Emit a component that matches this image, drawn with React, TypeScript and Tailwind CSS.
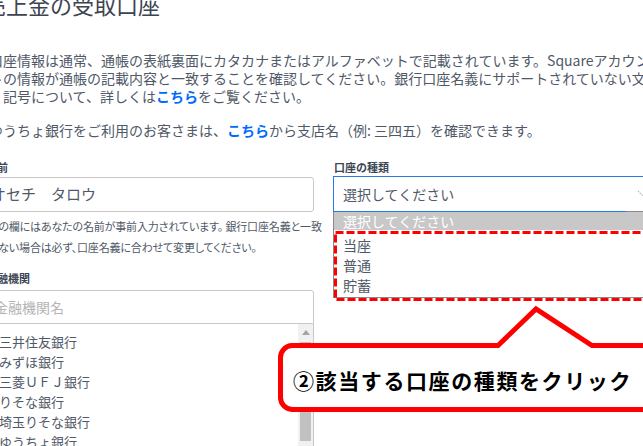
import React from "react";

const banks = ["三井住友銀行", "みずほ銀行", "三菱ＵＦＪ銀行", "りそな銀行", "埼玉りそな銀行", "ゆうちょ銀行"];

export default function App() {
  return (
    <div className="relative w-[643px] h-[446px] overflow-hidden bg-white font-['Noto_Sans_CJK_JP','Liberation_Sans',sans-serif] text-[#4f5968]">
      <div className="ml-[-11px] w-[720px]">
        <h1 className="ml-[-5px] mt-[-7px] text-[22px] leading-[22px] text-[#3d4451] whitespace-nowrap">売上金の受取口座</h1>

        <div className="mt-[36px] text-[14px] leading-[18px] whitespace-nowrap">
          <div>口座情報は通常、通帳の表紙裏面にカタカナまたはアルファベットで記載されています。Squareアカウント</div>
          <div>トの情報が通帳の記載内容と一致することを確認してください。銀行口座名義にサポートされていない文字</div>
          <div className="pl-[14px]">
            記号について、詳しくは<span className="text-[#006aff] font-bold">こちら</span>をご覧ください。
          </div>
        </div>

        <div className="mt-[16px] text-[14px] leading-[18px] whitespace-nowrap">
          ゆうちょ銀行をご利用のお客さまは、<span className="text-[#006aff] font-bold">こちら</span>から支店名（例: 三四五）を確認できます。
        </div>

        <div className="mt-[20px] flex items-start">
          {/* left column */}
          <div className="w-[325px] flex flex-col">
            <div className="ml-[-3px] text-[11px] leading-[16px] font-bold text-[#3c4656]">名前</div>
            <div className="mt-[2px] h-[35px] border border-[#c8c8c8] rounded-[3px] flex items-center pl-px text-[15px] text-[#4f5968] whitespace-nowrap">
              オセチ　タロウ
            </div>
            <div className="mt-[4px] text-[11px] leading-[21px] whitespace-nowrap tracking-[-0.15px] [font-feature-settings:'palt'] text-[#4f5968]">
              <div>この欄にはあなたの名前が事前入力されています。 銀行口座名義と一致</div>
              <div>しない場合は必ず、口座名義に合わせて変更してください。</div>
            </div>
            <div className="mt-[12px] ml-[-3px] text-[11px] leading-[16px] font-bold text-[#3c4656]">金融機関</div>
            <div className="mt-[4px] h-[34px] border border-[#c8c8c8] rounded-t-[3px] flex items-center pl-[4px] text-[14px] text-[#b5b5b5] whitespace-nowrap">
              金融機関名
            </div>
            <div className="h-[140px] border-r border-[#c8c8c8] flex">
              <div className="flex-1 pl-[10px] pt-[8px] text-[13px] leading-[20px] whitespace-nowrap">
                {banks.map((b) => (
                  <div key={b}>{b}</div>
                ))}
              </div>
              <div className="w-[15px] bg-[#f1f1f1] flex flex-col items-center">
                <div className="h-[17px] w-full flex items-center justify-center">
                  <svg width="8" height="5" viewBox="0 0 8 5">
                    <polygon points="0,5 4,0 8,5" fill="#a3a3a3" />
                  </svg>
                </div>
                <div className="mt-px h-[99px] w-[11px] bg-[#c1c1c1]" />
              </div>
            </div>
          </div>

          {/* right column */}
          <div className="ml-[19px] w-[340px] flex flex-col">
            <div className="ml-px text-[11px] leading-[16px] font-bold text-[#3c4656]">口座の種類</div>
            <div className="mt-px h-[35px] border-t border-x border-[#2a7ae2] flex items-center pl-[9px] text-[14px] text-[#4f5968] whitespace-nowrap">
              <span>選択してください</span>
              <svg className="ml-auto mr-[23px]" width="12" height="8" viewBox="0 0 12 8">
                <polyline points="1,1 6,6 11,1" fill="none" stroke="#b9b9b9" strokeWidth="1.2" strokeDasharray="1.5 1" />
              </svg>
            </div>
            <div className="flex h-px">
              <div className="w-[293px] bg-[#2a7ae2]" />
              <div className="flex-1 bg-[#8a8a8a]" />
            </div>
            <div className="border-l border-b border-[#8a8a8a] text-[14px] whitespace-nowrap">
              <div className="h-[18px] bg-[#c8c8c8] text-white pl-[9px] leading-[18px]">選択してください</div>
              <div className="pt-[5px] pb-[2px] pl-[9px] leading-[20px] text-[#4f5968]">
                <div>当座</div>
                <div>普通</div>
                <div>貯蓄</div>
              </div>
            </div>
          </div>
        </div>
      </div>

      {/* red dashed highlight */}
      <svg className="absolute left-[333px] top-[229px]" width="320" height="74" viewBox="0 0 320 74">
        <rect x="2.5" y="3.5" width="400" height="67" fill="none" stroke="#ff0000" strokeWidth="3" strokeDasharray="8 3" />
      </svg>

      {/* callout */}
      <svg className="absolute left-0 top-[300px]" width="643" height="146" viewBox="0 0 643 146">
        <path
          d="M 292 45.5 L 498 45.5 L 536 9 L 592 45.5 L 670 45.5 L 670 109.5 L 292 109.5 A 12 12 0 0 1 280.5 97.5 L 280.5 57.5 A 12 12 0 0 1 292 45.5 Z"
          fill="#ffffff"
          stroke="#ff0000"
          strokeWidth="5"
          strokeLinejoin="miter"
        />
      </svg>
      <div className="absolute left-[293px] top-[366px] text-[21px] leading-[28px] font-bold tracking-[1.6px] text-black whitespace-nowrap">
        ②該当する口座の種類をクリック
      </div>
    </div>
  );
}
